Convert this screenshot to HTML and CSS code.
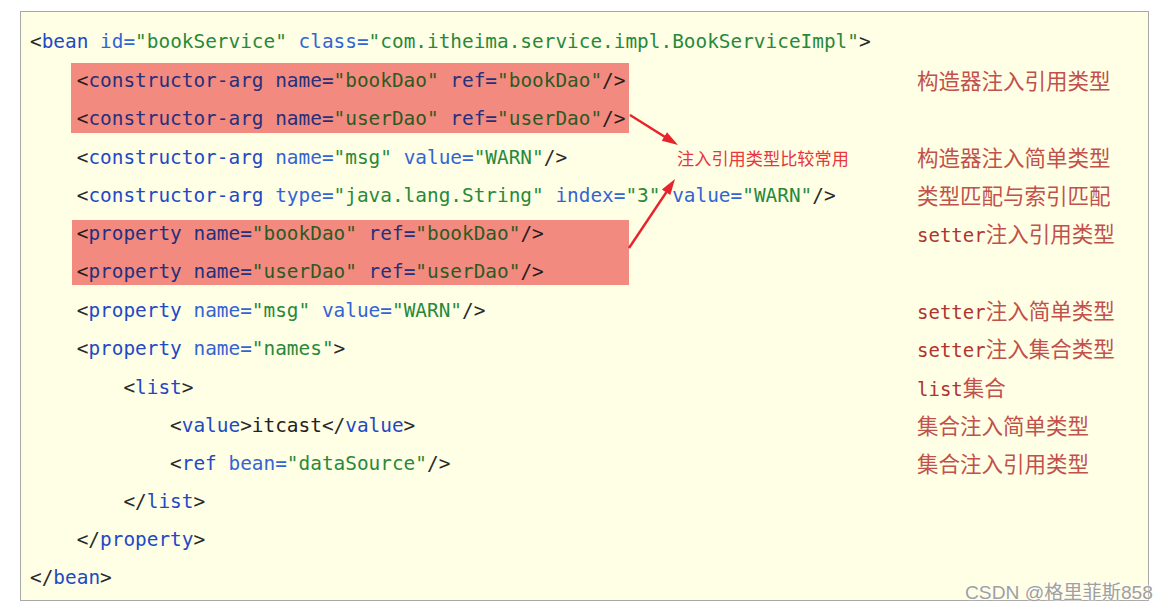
FILE: index.html
```html
<!DOCTYPE html>
<html lang="zh-CN">
<head>
  <meta charset="UTF-8" />
  <title>Spring 依赖注入方式</title>
  <link rel="stylesheet" href="styles.css">
</head>
<body>

  <div class="panel">

    <div class="row">
      <div class="code"><span class="p">&lt;</span><span class="t">bean</span> <span class="a">id=</span><span class="v">"bookService"</span> <span class="a">class=</span><span class="v">"com.itheima.service.impl.BookServiceImpl"</span><span class="p">&gt;</span></div>
    </div>

    <!-- constructor refs -->
    <div class="hl hl-one">
      <div class="row">
        <div class="code i1"><span class="p">&lt;</span><span class="t">constructor-arg</span> <span class="a">name=</span><span class="v">"bookDao"</span> <span class="a">ref=</span><span class="v">"bookDao"</span><span class="p">/&gt;</span></div>
        <div class="note"><span class="zh">构造器注入引用类型</span></div>
      </div>
      <div class="row">
        <div class="code i1"><span class="p">&lt;</span><span class="t">constructor-arg</span> <span class="a">name=</span><span class="v">"userDao"</span> <span class="a">ref=</span><span class="v">"userDao"</span><span class="p">/&gt;</span></div>
      </div>
    </div>

    <div class="row">
      <div class="code i1"><span class="p">&lt;</span><span class="t">constructor-arg</span> <span class="a">name=</span><span class="v">"msg"</span> <span class="a">value=</span><span class="v">"WARN"</span><span class="p">/&gt;</span></div>
      <div class="note"><span class="zh">构造器注入简单类型</span></div>
    </div>
    <div class="row">
      <div class="code i1"><span class="p">&lt;</span><span class="t">constructor-arg</span> <span class="a">type=</span><span class="v">"java.lang.String"</span> <span class="a">index=</span><span class="v">"3"</span> <span class="a">value=</span><span class="v">"WARN"</span><span class="p">/&gt;</span></div>
      <div class="note"><span class="zh">类型匹配与索引匹配</span></div>
    </div>

    <!-- setter refs -->
    <div class="hl hl-two">
      <div class="row">
        <div class="code i1"><span class="p">&lt;</span><span class="t">property</span> <span class="a">name=</span><span class="v">"bookDao"</span> <span class="a">ref=</span><span class="v">"bookDao"</span><span class="p">/&gt;</span></div>
        <div class="note">setter<span class="zh">注入引用类型</span></div>
      </div>
      <div class="row">
        <div class="code i1"><span class="p">&lt;</span><span class="t">property</span> <span class="a">name=</span><span class="v">"userDao"</span> <span class="a">ref=</span><span class="v">"userDao"</span><span class="p">/&gt;</span></div>
      </div>
    </div>

    <div class="row">
      <div class="code i1"><span class="p">&lt;</span><span class="t">property</span> <span class="a">name=</span><span class="v">"msg"</span> <span class="a">value=</span><span class="v">"WARN"</span><span class="p">/&gt;</span></div>
      <div class="note">setter<span class="zh">注入简单类型</span></div>
    </div>
    <div class="row">
      <div class="code i1"><span class="p">&lt;</span><span class="t">property</span> <span class="a">name=</span><span class="v">"names"</span><span class="p">&gt;</span></div>
      <div class="note">setter<span class="zh">注入集合类型</span></div>
    </div>
    <div class="row">
      <div class="code i2"><span class="p">&lt;</span><span class="t">list</span><span class="p">&gt;</span></div>
      <div class="note">list<span class="zh">集合</span></div>
    </div>
    <div class="row">
      <div class="code i3"><span class="p">&lt;</span><span class="t">value</span><span class="p">&gt;</span>itcast<span class="p">&lt;/</span><span class="t">value</span><span class="p">&gt;</span></div>
      <div class="note"><span class="zh">集合注入简单类型</span></div>
    </div>
    <div class="row">
      <div class="code i3"><span class="p">&lt;</span><span class="t">ref</span> <span class="a">bean=</span><span class="v">"dataSource"</span><span class="p">/&gt;</span></div>
      <div class="note"><span class="zh">集合注入引用类型</span></div>
    </div>
    <div class="row">
      <div class="code i2"><span class="p">&lt;/</span><span class="t">list</span><span class="p">&gt;</span></div>
    </div>
    <div class="row">
      <div class="code i1"><span class="p">&lt;/</span><span class="t">property</span><span class="p">&gt;</span></div>
    </div>
    <div class="row">
      <div class="code"><span class="p">&lt;/</span><span class="t">bean</span><span class="p">&gt;</span></div>
    </div>

    <!-- callout over the code -->
    <svg class="arrows" width="100" height="170" viewBox="0 0 100 170">
      <polygon points="29,14 31,16 65,37.5 64,35.5" fill="#e8232b"/>
      <line x1="30" y1="15" x2="65" y2="37" stroke="#e8232b" stroke-width="2.4"/>
      <polygon points="78,45 61.8,40.7 67,32.3" fill="#e8232b"/>
      <line x1="29" y1="148" x2="66.5" y2="92" stroke="#e8232b" stroke-width="2.4"/>
      <polygon points="75,79 70.3,95.1 61.9,89.5" fill="#e8232b"/>
    </svg>
    <div class="callout">注入引用类型比较常用</div>
  </div>

  <div class="mark">CSDN @格里菲斯858</div>

</body>
</html>
```

FILE: styles.css
```css
body {
  margin: 0;
  background: #ffffff;
}

.panel {
  position: relative;
  box-sizing: border-box;
  width: 1129px;
  margin: 11px 0 0 20px;
  padding: 11px 0 3px 9px;
  border: 1px solid #a8a8a8;
  background: #ffffe6;
  font-family: "DejaVu Sans Mono", "Liberation Mono", monospace;
  font-size: 19.4px;
}

.row {
  display: grid;
  grid-template-columns: 887px 1fr;
  align-items: center;
  height: 38.3px;
  line-height: 38.3px;
  white-space: pre;
}

.code {
  color: #222222;
}

.i1 {
  padding-left: 4ch;
}

.i2 {
  padding-left: 8ch;
}

.i3 {
  padding-left: 12ch;
}

.p {
  color: #2a2a2a;
}

.t {
  color: #2249c4;
}

.a {
  color: #3364d4;
}

.v {
  color: #28893a;
}

/* highlighted blocks */
.hl {
  background-image: linear-gradient(#f38a80, #f38a80);
  background-repeat: no-repeat;
}

.hl-one {
  background-position: 41px 2px;
  background-size: 558px 70px;
}

.hl-two {
  background-position: 42px 6px;
  background-size: 557px 65px;
}

.hl .t,
.hl .a {
  color: #24307c;
}

.hl .v {
  color: #2c5a22;
}

.hl .p {
  color: #2a1c1c;
}

.note {
  color: #b0332f;
  font-size: 19px;
}

.zh {
  font-family: "Noto Sans CJK SC", sans-serif;
  font-size: 21.5px;
  color: #c2514b;
}

.arrows {
  position: absolute;
  left: 579px;
  top: 88px;
}

.callout {
  position: absolute;
  left: 656px;
  top: 136px;
  font-family: "Noto Sans CJK SC", sans-serif;
  font-size: 17.2px;
  line-height: 20px;
  color: #e8363d;
}

.mark {
  position: absolute;
  left: 965px;
  top: 582px;
  font-family: "Liberation Sans", "Noto Sans CJK SC", sans-serif;
  font-size: 19.2px;
  line-height: 22px;
  color: #a0a0a0;
  text-shadow: 0 0 2px #ffffff, 0 0 2px #ffffff;
}
```
